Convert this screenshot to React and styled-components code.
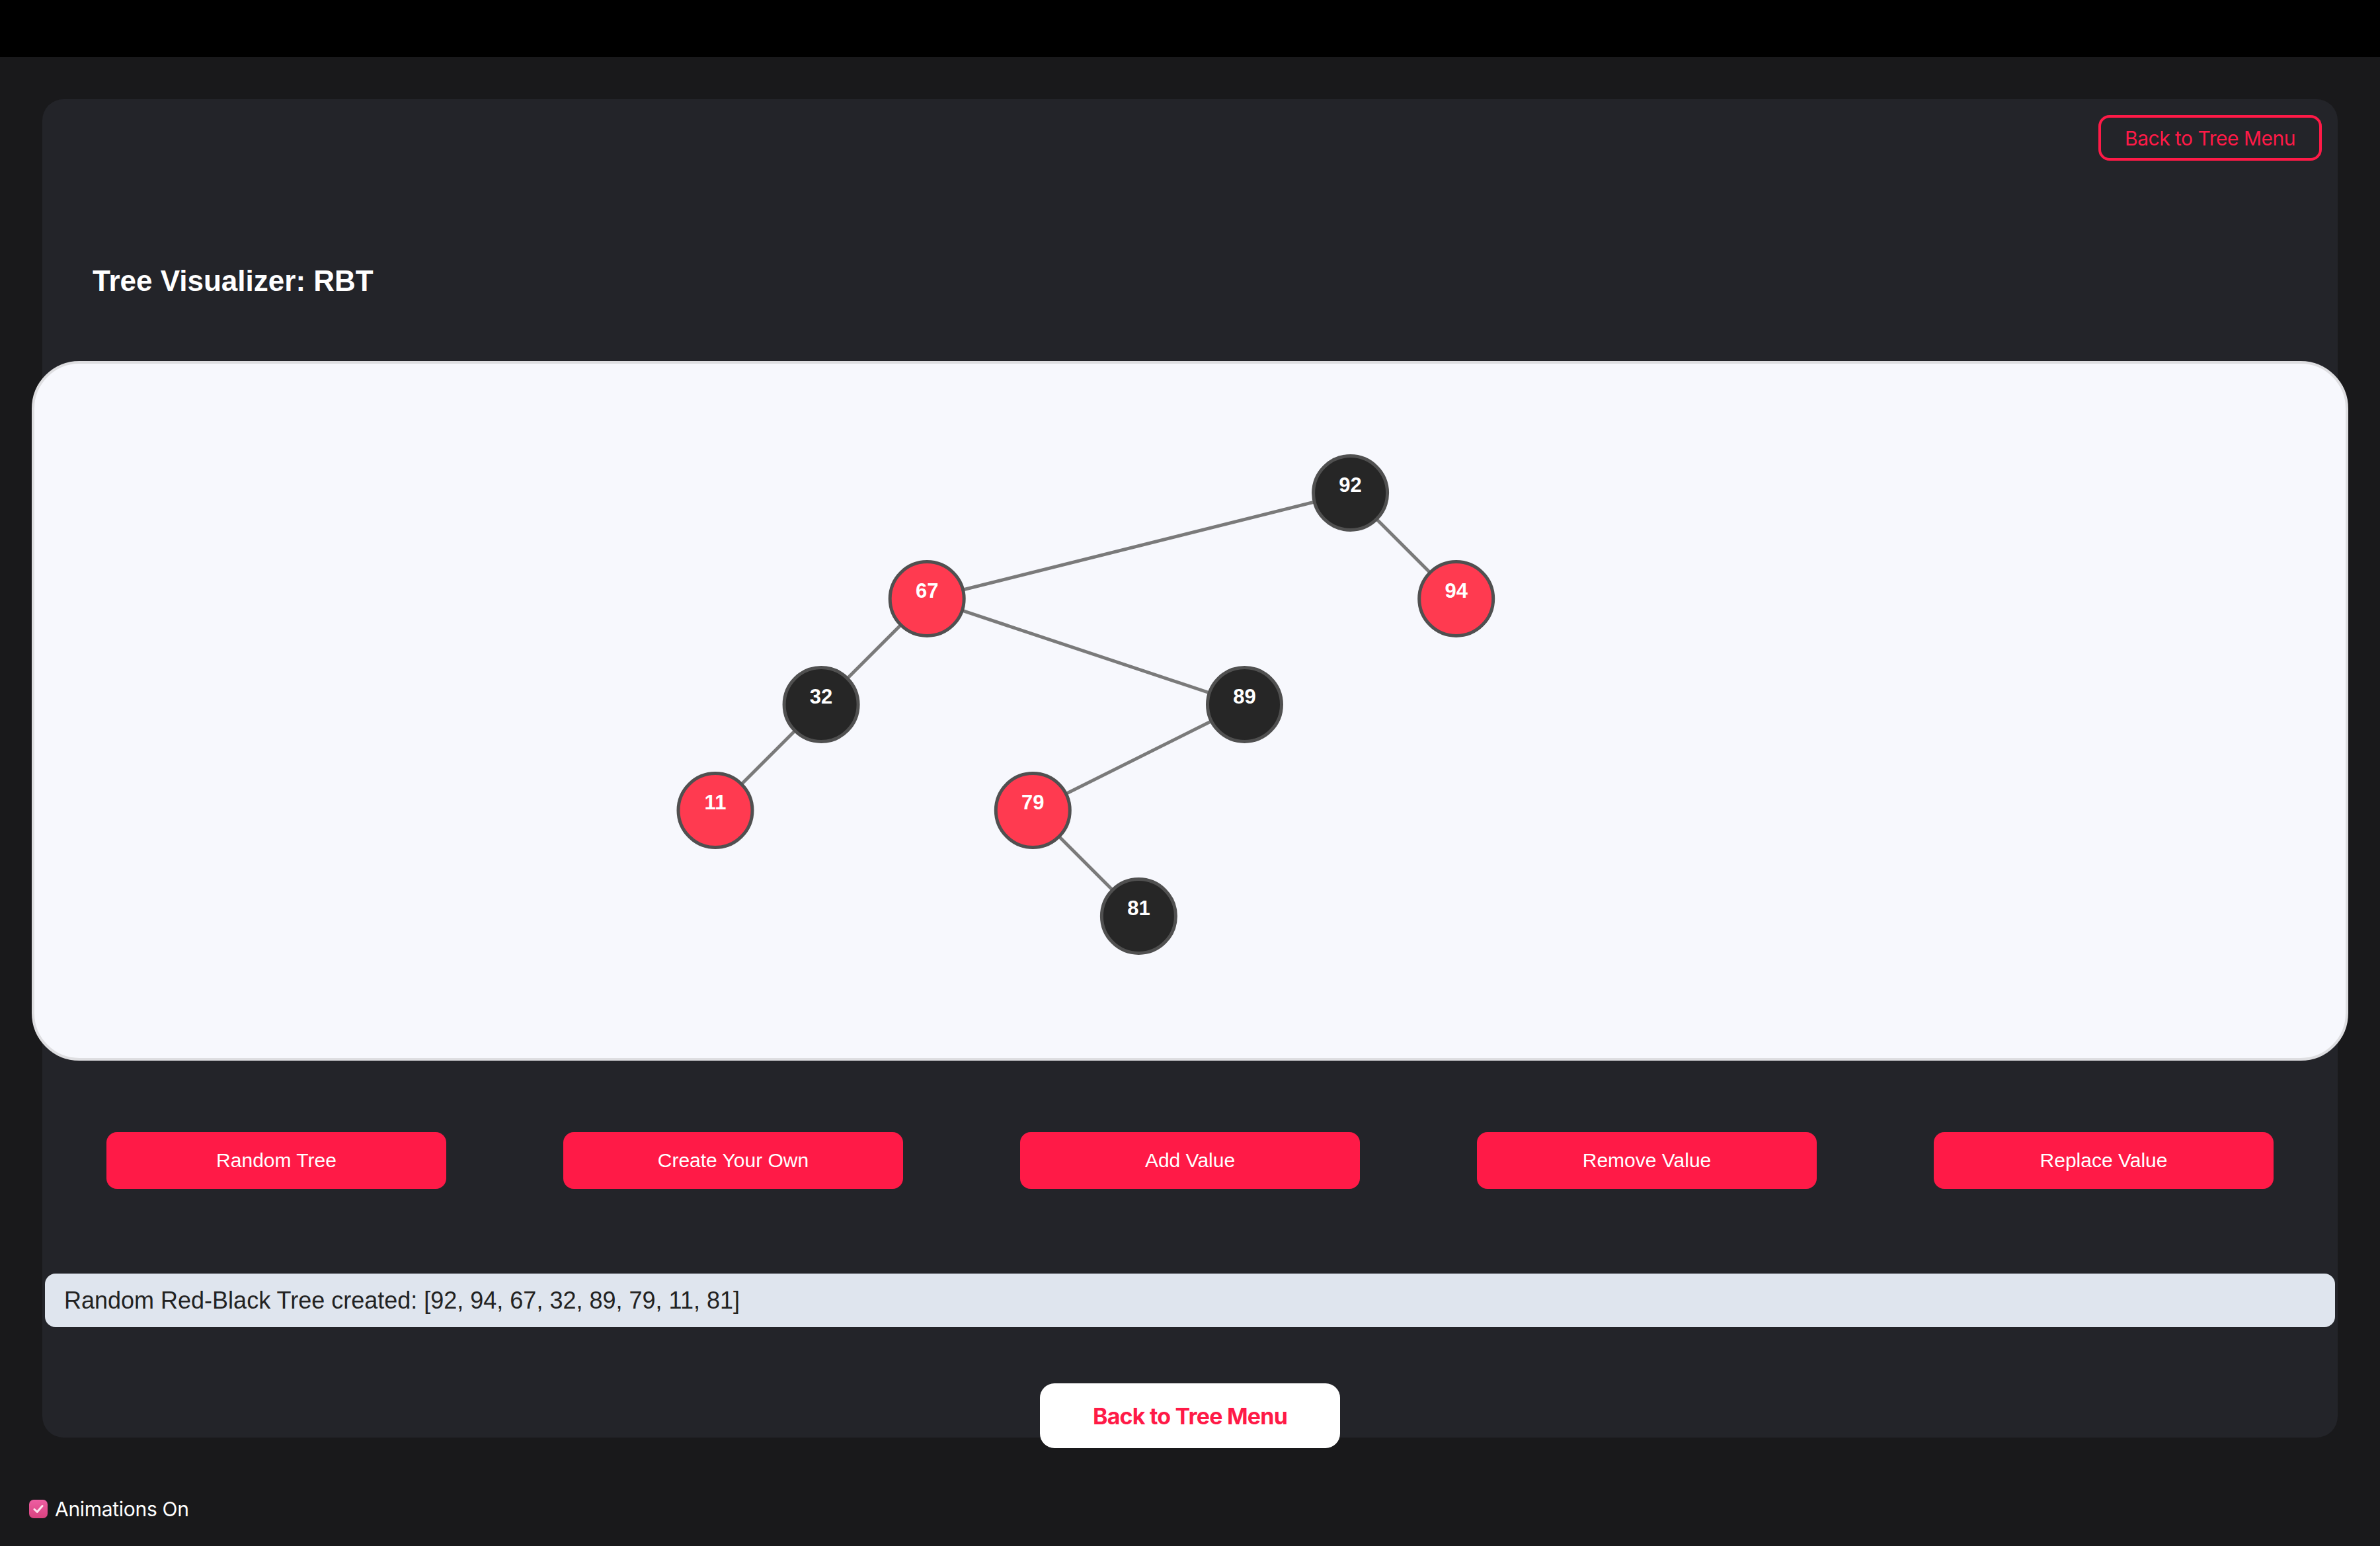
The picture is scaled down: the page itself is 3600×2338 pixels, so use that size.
import React from "react";
import styled, { createGlobalStyle } from "styled-components";

const GlobalStyle = createGlobalStyle`
  html, body { margin: 0; padding: 0; background: #19191b; }
  body { font-family: "Liberation Sans", Arial, sans-serif; min-height: 2338px; }
  * { box-sizing: border-box; }
`;

const TopBar = styled.header`
  height: 86px;
  background: #000;
`;

const Main = styled.main`
  padding: 64px 64px 0;
`;

const Panel = styled.section`
  background: #232429;
  border-radius: 32px;
  display: flex;
  flex-direction: column;
`;

const PanelTop = styled.div`
  display: flex;
  justify-content: flex-end;
  padding: 24px 24px 0;
`;

const OutlineButton = styled.button`
  width: 338px;
  height: 69px;
  border: 4px solid #ff1a47;
  border-radius: 17px;
  background: transparent;
  color: #ff1a47;
  font-family: Inter, "Noto Sans", sans-serif;
  font-size: 30px;
  letter-spacing: -0.5px;
  padding: 0;
  cursor: pointer;
`;

const Title = styled.h2`
  margin: 156px 0 0 76px;
  font-family: "Liberation Sans", Arial, sans-serif;
  font-weight: 700;
  font-size: 44px;
  line-height: 52px;
  color: #fff;
`;

const Canvas = styled.div`
  margin: 95px -16px 0;
  height: 1058px;
  background: #f7f8fd;
  border: 4px solid #dedee1;
  border-radius: 72px;
  overflow: hidden;
`;

const TreeSvg = styled.svg`
  display: block;
  width: 100%;
  height: 100%;
`;

const ActionRow = styled.div`
  margin-top: 108px;
  display: flex;
  justify-content: center;
  gap: 177px;
`;

const ActionButton = styled.button`
  width: 514px;
  height: 86px;
  border: none;
  border-radius: 16px;
  background: #ff1a47;
  color: #fff;
  font-family: "Liberation Sans", Arial, sans-serif;
  font-size: 30px;
  padding: 0;
  cursor: pointer;
`;

const Status = styled.div`
  margin: 128px 4px 0;
  height: 81px;
  display: flex;
  align-items: center;
  padding: 0 29px;
  background: #dfe5ee;
  border-radius: 16px;
  color: #222;
  font-family: "Liberation Sans", Arial, sans-serif;
  font-size: 36px;
`;

const BottomRow = styled.div`
  margin: 85px 0 -16px;
  display: flex;
  justify-content: center;
`;

const WhiteButton = styled.button`
  width: 454px;
  height: 98px;
  border: none;
  border-radius: 22px;
  background: #fff;
  color: #ff1a47;
  font-family: Inter, "Noto Sans", sans-serif;
  font-weight: 700;
  font-size: 34px;
  letter-spacing: -0.8px;
  padding: 0;
  cursor: pointer;
`;

const Footer = styled.label`
  margin: 88px 0 0 44px;
  height: 40px;
  display: flex;
  align-items: center;
  gap: 11px;
  color: #fff;
  font-family: Inter, "Noto Sans", sans-serif;
  font-size: 30px;
  letter-spacing: -0.3px;
`;

const CheckBox = styled.span`
  width: 28px;
  height: 28px;
  border-radius: 7px;
  background: linear-gradient(180deg, #ee5ea2 0%, #d8427f 100%);
  display: flex;
  align-items: center;
  justify-content: center;
`;

const nodes = [
  { v: 92, c: "b", d: 0, i: 6 },
  { v: 67, c: "r", d: 1, i: 2, p: 92 },
  { v: 94, c: "r", d: 1, i: 7, p: 92 },
  { v: 32, c: "b", d: 2, i: 1, p: 67 },
  { v: 89, c: "b", d: 2, i: 5, p: 67 },
  { v: 11, c: "r", d: 3, i: 0, p: 32 },
  { v: 79, c: "r", d: 3, i: 3, p: 89 },
  { v: 81, c: "b", d: 4, i: 4, p: 79 },
];

const pos = (n) => ({ x: 1030 + 160.1 * n.i, y: 195.5 + 160 * n.d });

function Tree() {
  const byV = Object.fromEntries(nodes.map((n) => [n.v, n]));
  return (
    <TreeSvg>
      {nodes
        .filter((n) => n.p)
        .map((n) => {
          const a = pos(n);
          const b = pos(byV[n.p]);
          return (
            <line key={"e" + n.v} x1={b.x} y1={b.y} x2={a.x} y2={a.y} stroke="#7a7a7a" strokeWidth="5" />
          );
        })}
      {nodes.map((n) => {
        const { x, y } = pos(n);
        return (
          <g key={n.v}>
            <circle cx={x} cy={y} r="56" fill={n.c === "r" ? "#ff3a50" : "#262626"} stroke="#505050" strokeWidth="5" />
            <text
              x={x}
              y={y - 2}
              textAnchor="middle"
              fill="#fff"
              fontFamily="'Liberation Sans', Arial, sans-serif"
              fontWeight="700"
              fontSize="31"
            >
              {n.v}
            </text>
          </g>
        );
      })}
    </TreeSvg>
  );
}

export default function App() {
  return (
    <>
      <GlobalStyle />
      <TopBar />
      <Main>
        <Panel>
          <PanelTop>
            <OutlineButton>Back to Tree Menu</OutlineButton>
          </PanelTop>
          <Title>Tree Visualizer: RBT</Title>
          <Canvas>
            <Tree />
          </Canvas>
          <ActionRow>
            {["Random Tree", "Create Your Own", "Add Value", "Remove Value", "Replace Value"].map((t) => (
              <ActionButton key={t}>{t}</ActionButton>
            ))}
          </ActionRow>
          <Status>Random Red-Black Tree created: [92, 94, 67, 32, 89, 79, 11, 81]</Status>
          <BottomRow>
            <WhiteButton>Back to Tree Menu</WhiteButton>
          </BottomRow>
        </Panel>
      </Main>
      <Footer>
        <CheckBox>
          <svg width="20" height="20" viewBox="0 0 20 20">
            <path d="M4 10.5 L8.2 14.5 L16 5.5" fill="none" stroke="#fde4ef" strokeWidth="3" strokeLinecap="round" strokeLinejoin="round" />
          </svg>
        </CheckBox>
        Animations On
      </Footer>
    </>
  );
}
